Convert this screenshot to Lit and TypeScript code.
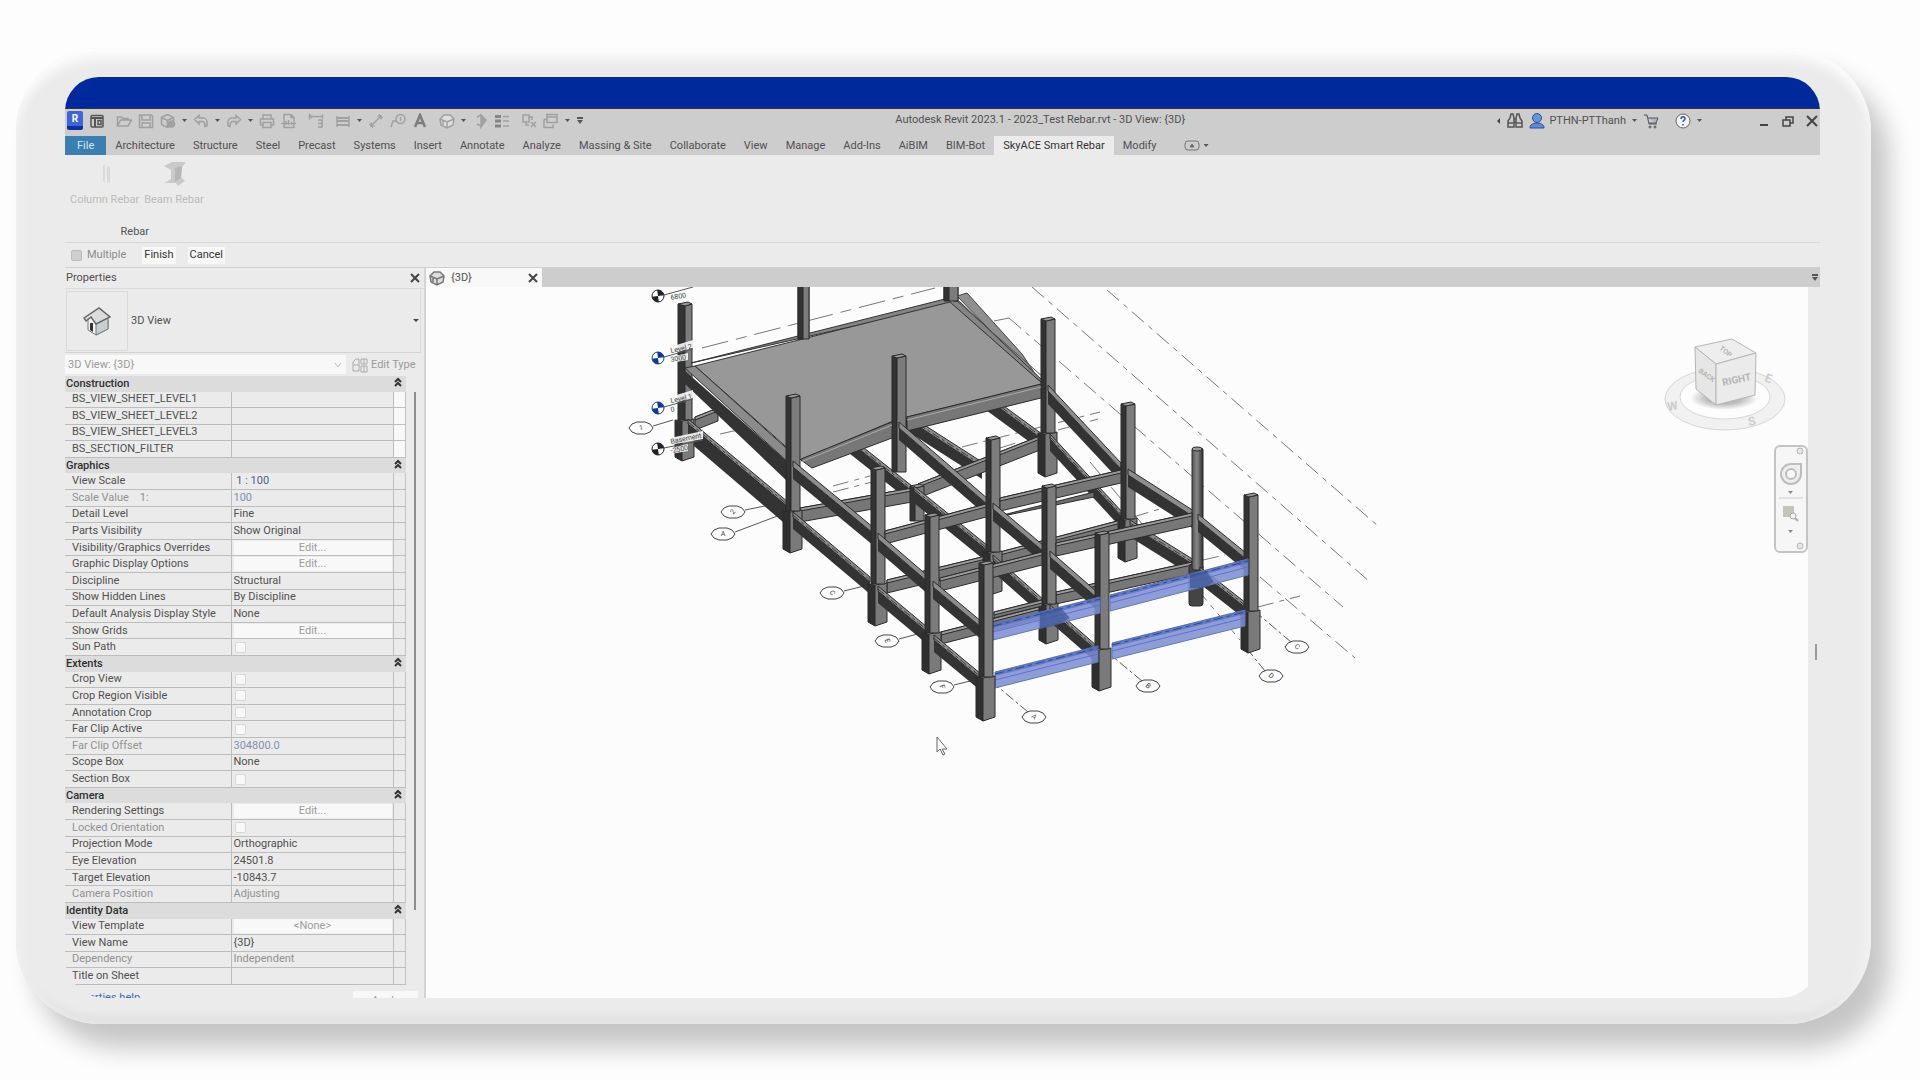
import { LitElement, html, svg, css, nothing } from "lit";
import { customElement } from "lit/decorators.js";

type Kind = "text" | "edit" | "check";
interface Prop {
  name: string;
  value?: string;
  kind?: Kind;
  dim?: boolean;
  blue?: boolean;
}
interface Section {
  title: string;
  rows: Prop[];
}

const SECTIONS: Section[] = [
  {
    title: "Construction",
    rows: [
      { name: "BS_VIEW_SHEET_LEVEL1" },
      { name: "BS_VIEW_SHEET_LEVEL2" },
      { name: "BS_VIEW_SHEET_LEVEL3" },
      { name: "BS_SECTION_FILTER" },
    ],
  },
  {
    title: "Graphics",
    rows: [
      { name: "View Scale", value: " 1 : 100", blue: true },
      { name: "Scale Value    1:", value: "100", dim: true, blue: true },
      { name: "Detail Level", value: "Fine" },
      { name: "Parts Visibility", value: "Show Original" },
      { name: "Visibility/Graphics Overrides", value: "Edit...", kind: "edit" },
      { name: "Graphic Display Options", value: "Edit...", kind: "edit" },
      { name: "Discipline", value: "Structural" },
      { name: "Show Hidden Lines", value: "By Discipline" },
      { name: "Default Analysis Display Style", value: "None" },
      { name: "Show Grids", value: "Edit...", kind: "edit" },
      { name: "Sun Path", kind: "check" },
    ],
  },
  {
    title: "Extents",
    rows: [
      { name: "Crop View", kind: "check" },
      { name: "Crop Region Visible", kind: "check" },
      { name: "Annotation Crop", kind: "check" },
      { name: "Far Clip Active", kind: "check" },
      { name: "Far Clip Offset", value: "304800.0", dim: true, blue: true },
      { name: "Scope Box", value: "None" },
      { name: "Section Box", kind: "check" },
    ],
  },
  {
    title: "Camera",
    rows: [
      { name: "Rendering Settings", value: "Edit...", kind: "edit" },
      { name: "Locked Orientation", kind: "check", dim: true },
      { name: "Projection Mode", value: "Orthographic" },
      { name: "Eye Elevation", value: "24501.8" },
      { name: "Target Elevation", value: "-10843.7" },
      { name: "Camera Position", value: "Adjusting", dim: true },
    ],
  },
  {
    title: "Identity Data",
    rows: [
      { name: "View Template", value: "<None>", kind: "edit" },
      { name: "View Name", value: "{3D}" },
      { name: "Dependency", value: "Independent", dim: true },
      { name: "Title on Sheet" },
    ],
  },
];

const TABS = [
  "Architecture", "Structure", "Steel", "Precast", "Systems", "Insert", "Annotate",
  "Analyze", "Massing & Site", "Collaborate", "View", "Manage", "Add-Ins", "AiBIM",
  "BIM-Bot", "SkyACE Smart Rebar", "Modify",
];

/* Quick access icons, each on a 16 by 16 grid. */
const GLYPHS: Record<string, unknown> = {
  home: svg`<g stroke="#555"><rect x="2" y="2.500" width="12" height="11.500" rx="1"/><path d="M2 5h12M6 5v9" stroke-width="2"/><path d="M9 7.500h3v4H9z"/></g>`,
  open: svg`<path d="M1.500 13V4h4l1.500 1.500h5V7M1.500 13l3-6h11l-3.500 6z"/>`,
  save: svg`<path d="M1.500 2h12l1 1v11.500h-13zM4 2v5h8V2M4 14v-4h8v4"/>`,
  sync: svg`<path d="M7.500 1.500l6 3v4M7.500 1.500l-6 3v7l6 3 2-1M1.500 4.500l6 3 6-3M7.500 7.500v7"/><circle cx="11.500" cy="11" r="3" fill="#a2a2a2"/>`,
  undo: svg`<path d="M1.500 6.500L6 2.500v2.500h4a4 4 0 0 1 4 4v4l-2 .5c0-3-1-5-3-5H6v2.500z"/>`,
  redo: svg`<path d="M14.500 6.500L10 2.500v2.500H6a4 4 0 0 0-4 4v4l2 .5c0-3 1-5 3-5h3v2.500z"/>`,
  print: svg`<path d="M4 5.500V2h8v3.500M4 12H1.500V6h13v6H12M4 9.500h8v5H4z"/>`,
  pdf: svg`<path d="M3 14.500v-13h7l3 3v10zM10 1.500v3h3M5 12V8M7.500 12V7M10.500 12V9"/><path d="M0 10.500h15" stroke-width="1"/>`,
  measure: svg`<path d="M1.500 1.500v5M1.500 3.500h13M14.500 1.500v4M1 1l3 4M10 7h4v7h-4M10 10.500h4"/>`,
  align: svg`<path d="M2 5h12M2 8h12M2 12h12" stroke-width="2"/><path d="M2 3v11M14 3v11"/>`,
  dim: svg`<path d="M3 13L13 3M9.500 3H13v3.500M3 9.500V13h3.500"/><path d="M1 11l4 4M11 1l4 4" stroke-width="1"/>`,
  tag: svg`<circle cx="10.500" cy="6" r="4.500"/><path d="M1 14l2-6h3M10.500 4v4"/>`,
  text: svg`<path d="M3 14L8 2l5 12M5 10h6" stroke="#7c7c7c" stroke-width="2.500"/>`,
  cube: svg`<path d="M1 6l4-4h6l4 4-1 6-6 3-6-3z" fill="#dedede"/><path d="M1 6l7 3 7-3M8 9v6M4 8v4"/>`,
  section: svg`<path d="M5 4l4-2 4 5-4 6-4-2" /><path d="M9 2v12l5-7z" fill="#a2a2a2"/>`,
  lines: svg`<path d="M1 3.500h6M1 8h6M1 13h6" stroke="#858585" stroke-width="3"/><path d="M9 3.500h6M9 8h6M9 13h6"/>`,
  close: svg`<path d="M2 2h6v7H2zM5 9v3h3M10 9l5 5M15 9l-5 5M8 4h3v3"/>`,
  windows: svg`<path d="M4 1.500h10v8H4zM4 4h10M1 6.500v8h9v-3M1 6.500h3"/>`,
};

interface QatItem {
  glyph: string;
  label: string;
  menu?: boolean;
  group?: boolean;
}
const QAT: QatItem[] = [
  { glyph: "home", label: "Home" },
  { glyph: "open", label: "Open", group: true },
  { glyph: "save", label: "Save" },
  { glyph: "sync", label: "Synchronize", menu: true },
  { glyph: "undo", label: "Undo", menu: true },
  { glyph: "redo", label: "Redo", menu: true },
  { glyph: "print", label: "Print" },
  { glyph: "pdf", label: "Export PDF" },
  { glyph: "measure", label: "Measure", group: true },
  { glyph: "align", label: "Aligned dimension", menu: true, group: true },
  { glyph: "dim", label: "Dimension" },
  { glyph: "tag", label: "Tag by category" },
  { glyph: "text", label: "Text" },
  { glyph: "cube", label: "Default 3D view", menu: true, group: true },
  { glyph: "section", label: "Section" },
  { glyph: "lines", label: "Thin lines" },
  { glyph: "close", label: "Close inactive views", group: true },
  { glyph: "windows", label: "Switch windows", menu: true },
];

const icon = (name: string) =>
  html`<svg class="icon" viewBox="0 0 16 16" aria-hidden="true">${GLYPHS[name]}</svg>`;

const cross = html`<svg class="cross" viewBox="0 0 12 12" aria-hidden="true"><path d="M2 2l8 8M10 2l-8 8"/></svg>`;

const house = svg`
  <path d="M5 13L16 6l9 8v9l-12 6-8-5z" fill="#f2f2f2" stroke="#777"/>
  <path d="M13 17l12-6v12l-12 6z" fill="#c9ced2" stroke="#777"/>
  <path d="M1 12L16 2l11 9-14 7-5-7-5 4z" fill="#dcdcdc" stroke="#666" stroke-width="1.500"/>
  <path d="M7 17h3v9l-3-2z" fill="#333"/>`;

/* ---------- Structural model ---------- */

const INK = "#2b2b2b";
const pts = (...p: number[]) => p.join(" ");

/* A column: shaded left face, lit right face, cap, and a wider footing below footY. */
const column = (x: number, top: number, bottom: number, footY = 0, w = 14, dark = 5) => {
  const end = footY || bottom;
  const foot = footY
    ? svg`<polygon fill="#2f2f2f" points=${pts(x - 3, footY, x + 4, footY + 1, x + 4, bottom, x - 3, bottom - 4)}></polygon>
        <polygon fill="#7a7a7a" points=${pts(x + 4, footY + 1, x + w + 2, footY - 1, x + w + 2, bottom - 4, x + 4, bottom)}></polygon>`
    : nothing;
  return svg`<g stroke=${INK} stroke-width="1">${foot}
    <polygon fill="#333" points=${pts(x, top + 2, x + dark, top + 4, x + dark, end, x, end)}></polygon>
    <polygon fill="#7c7c7c" points=${pts(x + dark, top + 4, x + w, top + 2, x + w, end, x + dark, end)}></polygon>
    <polygon fill="#9a9a9a" points=${pts(x, top + 2, x + w - 4, top, x + w, top + 2, x + dark, top + 4)}></polygon></g>`;
};

/* A beam running down to the right: lit top flange over a shaded side. */
const deep = (x1: number, y1: number, x2: number, y2: number, lit = 6, side = 12) => svg`
  <polygon fill="#333" points=${pts(x1, y1 + lit, x2, y2 + lit, x2, y2 + lit + side, x1, y1 + lit + side)}></polygon>
  <polygon fill="#8d8d8d" stroke=${INK} stroke-width="1" points=${pts(x1, y1, x2, y2, x2, y2 + lit, x1, y1 + lit)}></polygon>`;

/* A lower-level beam of the same run, with its hidden-line pattern. */
const deepLow = (x1: number, y1: number, x2: number, y2: number) => svg`
  ${deep(x1, y1, x2, y2, 5, 12)}
  <line x1=${x1} y1=${y1 + 3} x2=${x2} y2=${y2 + 3} stroke="#3a3a3a" stroke-width="1" stroke-dasharray="8 3 3 3"></line>`;

/* A beam running up to the right. */
const cross2 = (x1: number, y1: number, x2: number, y2: number, h = 13) => svg`
  <polygon fill="#777" stroke=${INK} stroke-width="1" points=${pts(x1, y1, x2, y2, x2, y2 + h, x1, y1 + h)}></polygon>
  <polygon fill="#9b9b9b" stroke=${INK} stroke-width="1" points=${pts(x1, y1, x2, y2, x2, y2 + 3, x1, y1 + 3)}></polygon>`;

/* A selected beam. */
const picked = (x1: number, y1: number, x2: number, y2: number, h = 16) => svg`
  <polygon fill="#7f8fd2" fill-opacity="0.880" stroke="#5f78b8" stroke-width="1" points=${pts(x1, y1, x2, y2, x2, y2 + h, x1, y1 + h)}></polygon>
  <polygon fill="#4a62b8" fill-opacity="0.600" points=${pts(x1, y1, x2, y2, x2, y2 + 4, x1, y1 + 4)}></polygon>
  <line x1=${x1} y1=${y1 + 8} x2=${x2} y2=${y2 + 8} stroke="#5f70d8" stroke-width="1"></line>
  <line x1=${x1} y1=${y1 + 2} x2=${x2} y2=${y2 + 2} stroke="#2d4b8c" stroke-width="1" stroke-dasharray="9 4 4 4"></line>`;

const ring = (x: number, y: number) =>
  pts(x - 12, y, x - 9, y - 4, x - 4, y - 6, x + 4, y - 6, x + 9, y - 4, x + 12, y, x + 9, y + 4, x + 4, y + 6, x - 4, y + 6, x - 9, y + 4);

/* A grid head at the left end of its line. */
const bubble = (x: number, y: number, label: string, tx: number, ty: number, turn: number) => svg`
  <line class="axis" x1=${x + 12} y1=${y - 2} x2=${tx} y2=${ty}></line>
  <polygon class="bubble" points=${ring(x, y)}></polygon>
  <text class="tiny" text-anchor="middle" transform="translate(${x} ${y}) rotate(${turn})" y="2">${label}</text>`;

/* A grid head at the lower end of its line. */
const tailBubble = (x: number, y: number, label: string, tx: number, ty: number) => svg`
  <line class="axis" x1=${x - 6} y1=${y - 5} x2=${tx} y2=${ty} stroke-dasharray="10 3 3 3"></line>
  <polygon class="bubble" points=${ring(x, y)}></polygon>
  <text class="tiny" text-anchor="middle" transform="translate(${x} ${y}) rotate(40)" y="2">${label}</text>`;

const level = (y: number, name: string, value: string, color: string) => {
  const right = name === "Basement" ? 703 : 693;
  return svg`
  <line class="axis" x1="664" y1=${y - 1} x2=${right} y2=${y - 9}></line>
  ${name
    ? svg`<polygon fill="#fafafa" fill-opacity="0.900" points=${pts(670, y - 11, right, y - 18, right, y - 10, 670, y - 4)}></polygon>
      <text class="tiny" transform="translate(671 ${y - 5}) rotate(-12)">${name}</text>`
    : nothing}
  ${value.length > 1 ? svg`<polygon fill="#fafafa" fill-opacity="0.900" points=${pts(670, y - 1, 688, y - 5, 688, y + 2, 670, y + 5)}></polygon>` : nothing}
  <text class="tiny" transform="translate(671 ${y + 4}) rotate(-10)">${value}</text>
  <circle cx="658" cy=${y} r="6" fill="#fff" stroke=${color} stroke-width="1"></circle>
  <path d="M658 ${y}v-6a6 6 0 0 1 6 6zM658 ${y}v6a6 6 0 0 1-6-6z" fill=${color} transform="rotate(-8 658 ${y})"></path>`;
};

const model = html`
  <svg class="model" viewBox="426 287 1382 711" preserveAspectRatio="xMinYMin meet" role="img" aria-label="3D structural model">
    <g class="grid">
      <path d="M1032 287L1370 582M1107 290L1378 526M1009 318L1343 607M1260 577L1355 658"/>
      <path d="M1090 462L1240 640"/>
      <path d="M702 348L935 288" stroke-dasharray="27 8 11 8"/>
      <path d="M994 321L1009 318" stroke-dasharray="none"/>
      <path d="M720 434L738 430M833 486L870 476M833 492L880 480M962 447L1100 412M1058 430L1098 419M1000 448L1016 443M1258 607L1300 596M1133 517L1163 508M1203 560L1225 555"/>
    </g>
    ${bubble(641, 428, "1", 673, 420, -10)}
    ${bubble(733, 512, "2", 775, 504, -50)}
    ${bubble(723, 534, "A", 788, 512, 0)}
    ${bubble(832, 593, "C", 868, 585, 60)}
    ${bubble(887, 641, "E", 925, 632, 70)}
    ${bubble(942, 687, "F", 978, 679, 70)}
    ${tailBubble(1034, 717, "A", 997, 686)}
    ${tailBubble(1148, 686, "B", 1112, 656)}
    ${tailBubble(1297, 647, "C", 1258, 614)}
    ${tailBubble(1271, 676, "D", 1248, 650)}

    ${column(678, 302, 461, 420, 14, 7)}
    ${cross2(695, 417, 718, 408)}
    ${column(798, 280, 345, 0, 11, 5)}
    ${column(944, 280, 302)}
    ${deepLow(960, 374, 1042, 434)}
    ${deepLow(904, 412, 982, 462)}
    ${deepLow(830, 421, 912, 486)}
    <polygon fill="#333" points="694 424 790 506 790 528 694 446"/>
    ${deepLow(688, 419, 788, 502)}

    <polygon fill="#8f8f8f" stroke="#444" points="957 296 967 293 1022 354 1042 384"/>
    <polygon fill="#858585" stroke="#333" points="691 363 945 299 960 302 1043 381 1043 384 951 304"/>
    <polygon fill="#989898" stroke="#333" points="695 366 950 302 1043 384 907 417 893 421 801 460"/>
    <path d="M958 302L1043 377" stroke="#555" fill="none"/>
    <polygon fill="#333" points="684 370 787 461 787 481 684 383"/>
    <polygon fill="#8b8b8b" stroke="#333" points="685 368 695 366 795 456 790 464"/>
    ${column(798, 280, 339, 0, 11, 5)}
    ${column(944, 280, 301)}

    ${cross2(800, 508, 912, 488, 14)}
    ${cross2(918, 484, 1040, 436, 14)}
    ${column(910, 484, 521, 0, 14, 5)}
    ${column(1041, 317, 477, 433)}
    ${column(892, 354, 472)}
    ${column(786, 394, 553, 511)}
    <polygon fill="#777" stroke="#2b2b2b" points="801 459 892 422 892 438 812 468 801 460"/>
    <polygon fill="#777" stroke="#2b2b2b" points="907 417 1041 384 1041 398 907 431"/>
    <path d="M801 462L892 425M907 420L1041 387" stroke="#aaa" fill="none"/>

    ${deepLow(1050, 434, 1124, 514)}
    ${deepLow(914, 486, 988, 546)}
    ${deepLow(793, 512, 870, 577)}
    ${deep(1048, 385, 1121, 463, 6, 13)}
    ${deep(899, 422, 988, 499)}
    ${deep(793, 461, 874, 528)}

    ${cross2(887, 580, 986, 556)}
    ${cross2(1000, 552, 1121, 520)}
    <polygon fill="#6d6d6d" stroke="#2b2b2b" points="1003 515 1094 492 1094 497 1003 516"/>
    ${column(1121, 402, 562, 519)}
    ${column(986, 436, 595, 552)}
    ${column(871, 466, 626, 584)}
    ${cross2(885, 531, 986, 504)}
    ${cross2(1000, 498, 1121, 470)}

    ${deepLow(1130, 520, 1194, 560)}
    ${deepLow(993, 555, 1044, 600)}
    ${deepLow(878, 586, 927, 627)}
    ${deep(1128, 469, 1194, 511)}
    ${deep(993, 503, 1044, 546)}
    ${deep(878, 533, 929, 577)}

    ${cross2(941, 632, 1042, 606, 12)}
    ${cross2(1056, 592, 1192, 562, 12)}
    <rect x="1189" y="564" width="14" height="42" rx="3" fill="#444" stroke="#2b2b2b"/>
    <rect x="1192" y="448" width="11" height="122" rx="2" fill="url(#round)" stroke="#2b2b2b"/>
    <ellipse cx="1197" cy="449" rx="5" ry="2" fill="#999" stroke="#2b2b2b"/>
    ${column(1042, 484, 644, 604)}
    ${column(925, 513, 674, 633)}
    ${cross2(940, 578, 1042, 552)}
    ${cross2(1056, 543, 1192, 513)}

    ${deepLow(1200, 567, 1246, 603)}
    ${deepLow(1050, 605, 1097, 646)}
    ${deepLow(934, 635, 981, 674)}
    ${deep(1198, 514, 1246, 553)}
    ${deep(1050, 551, 1097, 592)}
    ${deep(933, 581, 982, 622)}

    ${cross2(994, 612, 1042, 600, 6)}
    ${column(1244, 493, 653, 611)}
    ${column(1095, 531, 691, 649)}
    ${picked(1110, 595, 1248, 559)}
    ${picked(1112, 643, 1245, 610)}
    ${picked(993, 624, 1100, 597)}
    ${picked(995, 672, 1098, 646)}
    <polygon fill="#3c5596" fill-opacity="0.700" points="1190 574 1206 571 1214 582 1203 588 1190 588"/>
    <polygon fill="#3c5596" fill-opacity="0.700" points="1040 613 1060 607 1070 618 1058 625 1040 629"/>
    ${column(979, 561, 721, 677)}

    ${level(296, "", "6800", "#222")}
    ${level(358, "Level 2", "3000", "#0e3a94")}
    ${level(408, "Level 1", "0", "#0e3a94")}
    ${level(449, "Basement", "-2500", "#222")}

    <path d="M937 737v15l3-3 3 6 2-1-3-5h5z" fill="#fff" stroke="#666"/>

    <g class="cube">
      <ellipse cx="1725" cy="399" rx="60" ry="31" fill="#f1f1f1" stroke="#d6d6d6"/>
      <ellipse cx="1725" cy="397" rx="45" ry="22" fill="#fdfdfd" stroke="#d6d6d6"/>
      <ellipse cx="1724" cy="398" rx="34" ry="12" fill="url(#shade)"/>
      <polygon points="1695 347 1732 339 1756 353 1716 364" fill="#eee"/>
      <polygon points="1695 347 1716 364 1716 405 1696 389" fill="#e6e6e6"/>
      <polygon points="1716 364 1756 353 1755 395 1716 405" fill="#ebebeb"/>
      <text transform="translate(1723 386) rotate(-12)">RIGHT</text>
      <text class="small" transform="translate(1698 372) rotate(35)">BACK</text>
      <text class="small" transform="translate(1719 349) rotate(40)">TOP</text>
      <text class="mark" transform="translate(1668 411) rotate(-10)">W</text>
      <text class="mark" transform="translate(1749 426) rotate(-12)">S</text>
      <text class="mark" transform="translate(1764 381) rotate(20)">E</text>
    </g>
    <g fill="none" stroke="#ccc">
      <rect x="1775" y="446" width="32" height="106" rx="5" fill="#f6f6f6" stroke="#c4c4c4" stroke-width="2"/>
      <circle cx="1800" cy="451" r="3" fill="#e6e6e6" stroke="#b5b5b5"/>
      <circle cx="1800" cy="546" r="3" fill="#e6e6e6" stroke="#b5b5b5"/>
      <path d="M1791 464h10v10a10 10 0 1 1-10-10z" fill="#eee" stroke="#bdbdbd" stroke-width="2"/>
      <circle cx="1791" cy="474" r="5" fill="#f8f8f8" stroke="#bdbdbd" stroke-width="2"/>
      <path d="M1788 491h5l-2.500 3z" fill="#888" stroke="none"/>
      <path d="M1779 498h24"/>
      <rect x="1783" y="506" width="11" height="11" fill="#c4c4bc" stroke="none"/>
      <circle cx="1793" cy="516" r="3" fill="#f2f2f2" stroke="#aaa"/>
      <path d="M1795 518l3 3" stroke="#aaa" stroke-width="2"/>
      <path d="M1788 530h5l-2.500 3z" fill="#888" stroke="none"/>
    </g>
    <defs>
      <linearGradient id="round"><stop offset="0" stop-color="#555"/><stop offset="0.450" stop-color="#888"/><stop offset="1" stop-color="#2e2e2e"/></linearGradient>
      <radialGradient id="shade"><stop offset="0.500" stop-color="#bbb"/><stop offset="1" stop-color="#fdfdfd"/></radialGradient>
    </defs>
  </svg>`;

@customElement("revit-palette")
class RevitPalette extends LitElement {
  static styles = css`
    :host { display: flex; flex-direction: column; min-height: 0; border-right: 2px solid #d4d4d4; }
    button, select, input { font: inherit; color: inherit; margin: 0; border: 0; padding: 0; background: none; }
    .head { display: flex; align-items: center; justify-content: space-between; height: 20px; padding: 0 3px 0 1px; border-bottom: 1px solid #dadada; }
    .cross { display: block; width: 12px; height: 12px; fill: none; stroke: #444; stroke-width: 2; }
    .type { display: flex; align-items: center; gap: 3px; height: 64px; padding: 0 1px 0 1px; margin-right: 3px; border-bottom: 1px solid #d4d4d4; border-right: 1px solid #dcdcdc; text-align: left; }
    .thumb { display: flex; align-items: center; justify-content: center; width: 60px; height: 58px; border: 1px solid #dadada; }
    .thumb svg { width: 28px; height: 30px; }
    .type-name { flex: 1; }
    .caret { width: 6px; height: 3px; background: #444; clip-path: polygon(0 0, 100% 0, 50% 100%); }
    .instance { display: flex; align-items: center; gap: 6px; height: 23px; color: #9a9a9a; }
    .pick { display: flex; flex: 0 0 281px; align-items: center; height: 19px; background: #f8f8f8; }
    .pick select { flex: 1; appearance: none; opacity: 1; padding: 0 3px; }
    .pick svg { width: 8px; height: 8px; margin-right: 4px; fill: none; stroke: #bbb; }
    .edit-type { display: flex; align-items: center; gap: 3px; }
    .edit-type svg { width: 16px; height: 16px; fill: none; stroke: #aaa; }
    .body { display: flex; flex: 1; min-height: 0; gap: 8px; }
    table { width: 341px; height: 100%; border-collapse: collapse; table-layout: fixed; }
    .c-name { width: 166px; }
    .c-mark { width: 12px; }
    th, td { padding: 0; font-weight: 400; text-align: left; line-height: 14px; white-space: pre; }
    .row > * { border-bottom: 1px solid #bdbdbd; }
    .row > td { border-left: 1px solid #bdbdbd; padding-left: 2px; }
    .row > .mark { border-right: 1px solid #c4c4c4; padding: 0; }
    .row > .lit { background: #f8f8f8; }
    .row > th { padding-left: 7px; }
    .section { background: #dcdcdc; color: #2e2e2e; }
    .section th { padding-left: 1px; font-weight: 500; }
    .section svg { display: block; width: 8px; height: 10px; fill: none; stroke: #333; stroke-width: 2; }
    .dim { color: #929292; }
    .blue { color: #4c5f8c; }
    .dim .blue { color: #8291ad; }
    .edit { display: block; width: 158px; height: 14px; line-height: 14px; background: #f8f8f8; color: #9c9c9c; text-align: center; }
    input { display: block; appearance: none; width: 11px; height: 11px; margin-left: 1px; border: 1px solid #d6d6d6; border-radius: 2px; background: #f8f8f8; }
    .bar { width: 2px; height: 85%; margin-top: 16px; background: #8e8e8e; }
    .foot { display: flex; align-items: flex-start; justify-content: space-between; height: 13px; padding: 0 6px 0 1px; }
    a { margin-top: 6px; color: #4467ad; text-decoration: none; }
    .apply { flex: none; width: 65px; height: 20px; margin-top: 6px; background: #f8f8f8; color: #9c9c9c; }
  `;

  private cell(p: Prop, id: string) {
    if (p.kind === "edit") return html`<button class="edit" id=${id}>${p.value}</button>`;
    if (p.kind === "check") return html`<input type="checkbox" id=${id} />`;
    return html`<span class=${p.blue ? "blue" : ""}>${p.value ?? ""}</span>`;
  }

  private row(p: Prop, id: string, lit: boolean) {
    const name = p.kind ? html`<label for=${id}>${p.name}</label>` : p.name;
    return html`<tr class="row ${p.dim ? "dim" : ""}">
      <th scope="row">${name}</th><td>${this.cell(p, id)}</td><td class="mark ${lit ? "lit" : ""}"></td>
    </tr>`;
  }

  render() {
    return html`
      <div class="head"><span>Properties</span><button aria-label="Close properties">${cross}</button></div>
      <button class="type">
        <span class="thumb"><svg viewBox="0 0 28 30" aria-hidden="true">${house}</svg></span>
        <span class="type-name">3D View</span><span class="caret"></span>
      </button>
      <div class="instance">
        <span class="pick">
          <select aria-label="Instance"><option>3D View: {3D}</option></select>
          <svg viewBox="0 0 8 8" aria-hidden="true"><path d="M1 2l3 4 3-4"/></svg>
        </span>
        <button class="edit-type">
          <svg viewBox="0 0 16 16" aria-hidden="true"><path d="M1 5l3-3h3v12H1zM1 8h6M9 2h6v5H9zM9 9h6v6H9zM12 2v5M12 9v6"/></svg>Edit Type
        </button>
      </div>
      <div class="body">
        <table>
          <colgroup><col class="c-name" /><col /><col class="c-mark" /></colgroup>
          <tbody>
            ${SECTIONS.map((s, si) => html`
              <tr class="section">
                <th colspan="2" scope="colgroup">${s.title}</th>
                <td><button aria-label="Collapse ${s.title}"><svg viewBox="0 0 8 10" aria-hidden="true"><path d="M1 5l3-3 3 3M1 9l3-3 3 3"/></svg></button></td>
              </tr>
              ${s.rows.map((p, i) => this.row(p, `prop-${si}-${i}`, si === 0))}`)}
          </tbody>
        </table>
        <div class="bar"></div>
      </div>
      <div class="foot"><a href="#help">Properties help</a><button class="apply">Apply</button></div>
    `;
  }
}

@customElement("app-root")
class AppRoot extends LitElement {
  static styles = css`
    :host { display: flex; box-sizing: border-box; height: 100vh; padding: 48px 49px 56px 16px; overflow: hidden; background: #fdfdfd; color: #505050; font: 11px/14px Roboto, "Noto Sans", sans-serif; }
    button, input { font: inherit; color: inherit; margin: 0; border: 0; padding: 0; background: none; }
    .device { display: flex; flex: 1; min-width: 0; padding: 29px 51px 26px 49px; border-radius: 84px; background: #ebebeb;
      box-shadow: inset 0 18px 12px -8px #fdfdfd, inset 6px 0 8px -2px #f2f2f2, inset -10px 0 10px -4px #f2f2f2, inset 0 -10px 10px -4px #dcdcdc, 18px 24px 24px 0 #c6c6c6; }
    .screen { display: flex; flex: 1; flex-direction: column; min-width: 0; border-radius: 34px 34px 40px 40px; overflow: hidden; }
    .band { flex: none; height: 31px; background: #002a9c; border-bottom: 1px solid #333; }
    .title { display: flex; align-items: center; box-sizing: border-box; height: 27px; padding: 0 2px 4px; background: #cdcdcd; }
    .qat { display: flex; align-items: center; gap: 6px; }
    .logo { display: flex; flex: none; align-items: center; justify-content: center; width: 16px; height: 19px; background: #3f63d8; border-bottom: 4px solid #0a3199; border-radius: 2px; box-sizing: border-box; color: #fff; font-size: 10px; font-weight: 700; }
    .icon { display: block; width: 16px; height: 16px; fill: none; stroke: #a0a0a0; stroke-width: 1.5; }
    .group { margin-left: 5px; }
    .more { width: 5px; height: 3px; background: #555; clip-path: polygon(0 0, 100% 0, 50% 100%); }
    .custom { width: 8px; height: 8px; fill: #555; }
    .name { flex: 1; padding-bottom: 2px; text-align: center; }
    .account { display: flex; align-items: center; gap: 6px; }
    .user { display: flex; align-items: center; gap: 4px; }
    .help { margin-left: 10px; }
    .tall { display: block; width: 16px; height: 18px; }
    .window { display: flex; align-items: center; gap: 12px; margin-left: 50px; }
    .window svg { display: block; width: 12px; height: 12px; fill: none; stroke: #444; stroke-width: 2; }
    .tabs { display: flex; height: 19px; background: #cdcdcd; }
    .tab { padding: 0 9px; white-space: nowrap; }
    .file { padding: 0 12px; background: #3b7fb0; color: #d4e6f4; }
    .on { background: #ebebeb; color: #333; }
    .expand { display: flex; align-items: center; gap: 4px; margin-left: 18px; }
    .expand svg { width: 16px; height: 12px; fill: none; stroke: #777; }
    .ribbon { display: flex; align-items: stretch; height: 87px; padding: 0 5px; background: #ebebeb; border-bottom: 1px solid #d8d8d8; }
    .panel { display: flex; flex-direction: column; justify-content: space-between; align-items: center; padding: 6px 0 3px; }
    .tools { display: flex; gap: 5px; color: #bbb; }
    .tool { display: flex; flex-direction: column; align-items: center; gap: 6px; }
    .tool svg { width: 28px; height: 26px; }
    .panel-name { padding-right: 4px; color: #555; }
    .options { display: flex; align-items: center; gap: 12px; height: 24px; padding-left: 6px; background: #ebebeb; border-bottom: 1px solid #d0d0d0; }
    .multi { display: flex; align-items: center; gap: 5px; padding-right: 4px; color: #8c8c8c; }
    .multi input { appearance: none; width: 11px; height: 11px; border: 1px solid #bbb; border-radius: 2px; background: #cfcfcf; }
    .push { height: 17px; padding: 0 2px; background: #f8f8f8; color: #333; }
    .work { display: flex; flex: 1; min-height: 0; }
    revit-palette { flex: 0 0 359px; background: #ebebeb; }
    .view { display: flex; flex: 1; flex-direction: column; min-width: 0; }
    .views { display: flex; flex: none; align-items: center; justify-content: space-between; height: 19px; padding-right: 1px; background: #cdcdcd; }
    .view-tab { display: flex; align-items: center; gap: 6px; box-sizing: border-box; width: 116px; height: 19px; padding: 0 3px; background: #f8f8f8; }
    .view-tab span { flex: 1; }
    .view-tab .icon { stroke: #777; }
    .cross { display: block; width: 12px; height: 12px; fill: none; stroke: #444; stroke-width: 2; }
    .stage { display: flex; flex: 1; min-height: 0; background: #ebebeb; }
    .canvas { flex: 1; min-width: 0; background: #fcfcfc; overflow: hidden; }
    .gutter { display: flex; flex: 0 0 12px; align-items: center; justify-content: center; padding-bottom: 0; padding-left: 4px; padding-top: 18px; box-sizing: border-box; }
    .grip { width: 2px; height: 16px; background: #999; }
    .model { display: block; width: 100%; }
    .grid { fill: none; stroke: #777; stroke-width: 1; stroke-dasharray: 16 6 5 6; }
    .axis { stroke: #555; stroke-width: 1; }
    .bubble { fill: #fcfcfc; stroke: #444; stroke-width: 1; }
    .tiny { font-size: 7px; fill: #444; }
    .cube polygon { stroke: #b5b5b5; stroke-width: 1; }
    .cube text { font-size: 10px; font-weight: 700; fill: #b5b5b5; }
    .cube .small { font-size: 7px; }
    .cube .mark { font-size: 12px; fill: #ccc; }
  `;

  render() {
    return html`
      <div class="device">
        <main class="screen">
          <div class="band"></div>
          <header class="title">
            <div class="qat">
              <span class="logo">R</span>
              ${QAT.map((q) => html`
                <button class=${q.group ? "group" : ""} aria-label=${q.label}>${icon(q.glyph)}</button>
                ${q.menu ? html`<button class="more" aria-label="${q.label} menu"></button>` : nothing}`)}
              <svg class="custom" viewBox="0 0 8 8" aria-hidden="true"><path d="M1 0h6v2H1zM1 3h6L4 7z"/></svg>
            </div>
            <span class="name">Autodesk Revit 2023.1 - 2023_Test Rebar.rvt - 3D View: {3D}</span>
            <div class="account">
              <svg width="5" height="8" viewBox="0 0 5 8" aria-hidden="true"><path d="M4 1v6L1 4z" fill="#444"/></svg>
              <button aria-label="Search"><svg class="tall" viewBox="0 0 16 18" fill="none" stroke="#555" stroke-width="1.500"><path d="M3 6l1-4h2l1 4v9H1V9zM13 6l-1-4h-2l-1 4v9h6V9zM7 7h2M7 10h2M1 11h6M9 11h6"/></svg></button>
              <button class="user"><svg class="tall" viewBox="0 0 16 18"><circle cx="8" cy="6" r="4.500" fill="#6a94d8" stroke="#2f4f8c"/><path d="M1 16c0-4 3-4 5-5h4c2 1 5 1 5 5z" fill="#5d8ad0" stroke="#2f4f8c"/></svg>PTHN-PTThanh</button>
              <span class="more"></span>
              <button aria-label="App store"><svg class="tall" viewBox="0 0 16 18" fill="#aab4c4" stroke="#555"><path d="M1 3h3l2 9h8M5 6h10l-2 5H6"/><circle cx="7" cy="15" r="1"/><circle cx="12" cy="15" r="1"/></svg></button>
              <button class="help" aria-label="Help"><svg class="tall" viewBox="0 0 16 18"><circle cx="8" cy="9" r="7" fill="#f2f2f2" stroke="#666"/><path d="M6 7c0-3 4-3 4 0 0 1-2 1.500-2 3M8 12v1.500" fill="none" stroke="#3a55a8" stroke-width="1.500"/></svg></button>
              <span class="more"></span>
              <div class="window">
                <button aria-label="Minimize"><svg viewBox="0 0 12 12"><path d="M2 10h8"/></svg></button>
                <button aria-label="Restore"><svg viewBox="0 0 12 12"><path d="M1 5h7v6H1zM4 5V2h7v6H8" stroke-width="1.500"/></svg></button>
                <button aria-label="Close"><svg viewBox="0 0 12 12"><path d="M1 1l10 10M11 1L1 11"/></svg></button>
              </div>
            </div>
          </header>
          <nav class="tabs">
            <button class="tab file">File</button>
            ${TABS.map((t) => html`<button class="tab ${t === "SkyACE Smart Rebar" ? "on" : ""}">${t}</button>`)}
            <button class="expand" aria-label="Ribbon display">
              <svg viewBox="0 0 16 12"><rect x="1" y="1" width="14" height="9" rx="3"/><path d="M6 7l2-3 2 3z" fill="#555"/></svg>
              <span class="more"></span>
            </button>
          </nav>
          <section class="ribbon">
            <div class="panel">
              <div class="tools">
                <button class="tool"><svg viewBox="0 0 28 26"><path d="M12 5l2-2v19l-2-2zM16 6l3-1v16l-3 1z" fill="#dadada"/></svg>Column Rebar</button>
                <button class="tool"><svg viewBox="0 0 28 26"><path d="M4 5L12 1h14l-4 5-1 10 4 4-7 5-2-3H4l7-4V9z" fill="#cacaca"/><path d="M15 7l7-2-1 12-6 4z" fill="#b6b6b6"/></svg>Beam Rebar</button>
              </div>
              <span class="panel-name">Rebar</span>
            </div>
          </section>
          <section class="options">
            <label class="multi"><input type="checkbox" />Multiple</label>
            <button class="push">Finish</button>
            <button class="push">Cancel</button>
          </section>
          <div class="work">
            <revit-palette></revit-palette>
            <section class="view">
              <div class="views">
                <div class="view-tab">${icon("cube")}<span>{3D}</span><button aria-label="Close view">${cross}</button></div>
                <svg class="custom" viewBox="0 0 8 8" aria-hidden="true"><path d="M1 0h6v2H1zM1 3h6L4 7z"/></svg>
              </div>
              <div class="stage">
                <div class="canvas">${model}</div>
                <div class="gutter"><span class="grip"></span></div>
              </div>
            </section>
          </div>
        </main>
      </div>
    `;
  }
}
